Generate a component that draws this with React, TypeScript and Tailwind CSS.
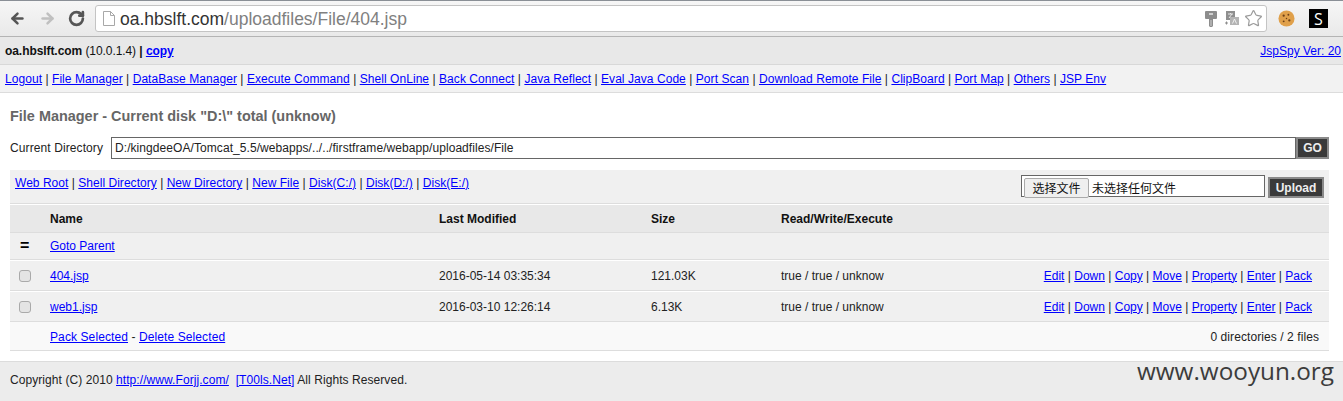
import { useState } from "react";
import { ArrowLeft, ArrowRight, RotateCw, Star } from "lucide-react";

const navLinks = [
  "Logout",
  "File Manager",
  "DataBase Manager",
  "Execute Command",
  "Shell OnLine",
  "Back Connect",
  "Java Reflect",
  "Eval Java Code",
  "Port Scan",
  "Download Remote File",
  "ClipBoard",
  "Port Map",
  "Others",
  "JSP Env",
];
const toolLinks = ["Web Root", "Shell Directory", "New Directory", "New File", "Disk(C:/)", "Disk(D:/)", "Disk(E:/)"];
const actions = ["Edit", "Down", "Copy", "Move", "Property", "Enter", "Pack"];

const files = [
  { name: "404.jsp", modified: "2016-05-14 03:35:34", size: "121.03K" },
  { name: "web1.jsp", modified: "2016-03-10 12:26:14", size: "6.13K" },
];

function A({ children }: { children: React.ReactNode }) {
  return <a className="text-[#0000ff] underline cursor-pointer">{children}</a>;
}

function LinkRow({ items }: { items: string[] }) {
  return (
    <>
      {items.map((l, i) => (
        <span key={l}>
          {i > 0 && " | "}
          <A>{l}</A>
        </span>
      ))}
    </>
  );
}

function Toolbar() {
  return (
    <div className="h-[37px] flex items-center border-t border-b border-t-[#8a8f96] border-b-[#b4b4b4] bg-gradient-to-b from-[#f6f6f6] to-[#e9e9e9]">
      <div className="w-[95px] flex items-center pl-[9px]">
        <ArrowLeft className="w-[17px] h-[17px] text-[#555]" strokeWidth={3.5} />
        <ArrowRight className="ml-[13px] w-[17px] h-[17px] text-[#c0c0c0]" strokeWidth={3.5} />
        <RotateCw className="ml-[12px] w-[17px] h-[17px] text-[#555]" strokeWidth={3.8} />
      </div>
      <div className="w-[1172px] h-[27px] flex items-center bg-white border border-[#c4c4c4] rounded-[3px] pl-[7px] pr-[3px]">
        <svg className="shrink-0" width="12" height="15" viewBox="0 0 12 15" fill="none">
          <path d="M.5.500h7l4 4v10H.5z" fill="#fff" stroke="#a8a8a8" />
          <path d="M7.500.500v4h4" stroke="#a8a8a8" />
        </svg>
        <span className="ml-[5px] text-[17.500px] text-[#333]">
          oa.hbslft.com<span className="text-[#808080]">/uploadfiles/File/404.jsp</span>
        </span>
        <div className="ml-auto flex items-center">
          <svg width="12" height="16" viewBox="0 0 12 16">
            <path d="M1 0h10a1 1 0 0 1 1 1v6a1 1 0 0 1-1 1H8v7l-1 1H5l-1-1V8H1a1 1 0 0 1-1-1V1a1 1 0 0 1 1-1z" fill="#8d8d8d" />
            <rect x="4" y="2" width="4" height="2" fill="#d0d0d0" />
            <rect x="5.500" y="9" width="1" height="6" fill="#d0d0d0" />
          </svg>
          <svg className="ml-[8px]" width="14" height="15" viewBox="0 0 14 15">
            <rect x="1" y="0" width="9" height="9" fill="#8f8f8f" />
            <path d="M3 3h5M5.500 2v1M4 7l3-4" stroke="#e8e8e8" fill="none" />
            <rect x="5" y="6" width="9" height="8" fill="#b4b4b4" />
            <path d="M7.500 12.500l2-4.500 2 4.500" stroke="#f0f0f0" fill="none" />
            <path d="M0 12h3M1.500 10.500v3" stroke="#8d8d8d" />
          </svg>
          <Star className="ml-[5px] w-[19px] h-[19px] text-[#9b9b9b]" strokeWidth={1.5} />
        </div>
      </div>
      <svg className="ml-[11px]" width="17" height="17" viewBox="0 0 18 18">
        <circle cx="9" cy="9" r="8.500" fill="#e0a04a" />
        <circle cx="6" cy="6" r="1.200" fill="#6d3f16" />
        <circle cx="11" cy="5" r="1" fill="#6d3f16" />
        <circle cx="12" cy="11" r="1.200" fill="#6d3f16" />
        <circle cx="6" cy="12" r="1" fill="#6d3f16" />
        <circle cx="9" cy="9" r="0.800" fill="#6d3f16" />
      </svg>
      <div className="ml-[14px] w-[19px] h-[19px] bg-black text-white text-[16px] flex items-center justify-center font-['Open_Sans',sans-serif]">
        S
      </div>
    </div>
  );
}

export default function App() {
  const [dir, setDir] = useState("D:/kingdeeOA/Tomcat_5.5/webapps/../../firstframe/webapp/uploadfiles/File");

  return (
    <div className="w-[1343px] h-[401px] overflow-hidden bg-white text-[12px] leading-[14px] text-[#222] font-['Liberation_Sans',Arial,sans-serif]">
      <Toolbar />

      {/* Header */}
      <div className="h-[28px] pt-[1px] flex items-center justify-between pl-[5px] pr-[2px] bg-[#e8e8e8] border-b border-[#d8d8d8]">
        <span className="font-bold text-[#111] tracking-[-0.07px]">
          oa.hbslft.com <span className="font-normal">(10.0.1.4)</span> | <A>copy</A>
        </span>
        <span className="whitespace-nowrap">
          <A>JspSpy Ver: 20</A>
        </span>
      </div>

      {/* Nav */}
      <div className="h-[28px] flex items-center px-[5px] bg-[#f2f2f2] border-b border-[#dcdcdc]">
        <span className="tracking-[0.055px]">
          <LinkRow items={navLinks} />
        </span>
      </div>

      {/* File manager */}
      <div className="h-[268px] pt-[15px] pl-[10px] pr-[14px]">
        <h2 className="text-[14.450px] leading-[16px] font-bold text-[#666]">
          File Manager - Current disk "D:\" total (unknow)
        </h2>
        <div className="mt-[13px] h-[22px] flex items-center">
          <label className="w-[101px] tracking-[0.1px]">Current Directory</label>
          <input
            value={dir}
            onChange={(e) => setDir(e.target.value)}
            className="w-[1185px] h-[22px] px-[3px] bg-white border border-[#666] text-[12px] tracking-[0.07px] text-[#222] outline-none"
          />
          <button className="w-[33px] h-[22px] bg-[#3a3a3a] border-2 border-[#8a8a8a] text-[#eee] text-[12px] font-bold">
            GO
          </button>
        </div>

        <div className="mt-[11px] h-[34px] flex items-start justify-between bg-[#f0f0f0] pl-[5px] pr-[5px] border-b border-[#dddddd]">
          <span className="mt-[6px] tracking-[0.03px]">
            <LinkRow items={toolLinks} />
          </span>
          <div className="flex items-start gap-[3px] mt-[5px]">
            <div className="w-[244px] h-[22px] flex items-start pl-[2px] pt-[2px] bg-white border border-[#666] text-[12px] text-[#111] font-['Noto_Sans_CJK_SC',sans-serif]">
              <span className="w-[65px] h-[20px] shrink-0 flex items-center justify-center bg-[#efefef] border border-[#aaa] rounded-[2px]">
                选择文件
              </span>
              <span className="ml-[3px] leading-[20px]">未选择任何文件</span>
            </div>
            <button className="mt-[2px] w-[56px] h-[21px] bg-[#3a3a3a] border-2 border-[#8a8a8a] text-[#eee] text-[12px] font-bold">
              Upload
            </button>
          </div>
        </div>

        {/* Table header */}
        <div className="h-[29px] flex items-center font-bold text-[#111] bg-[#e8e8e8] border-t border-b border-t-white border-b-[#dddddd]">
          <span className="ml-[40px] w-[389px]">Name</span>
          <span className="w-[212px]">Last Modified</span>
          <span className="w-[130px]">Size</span>
          <span>Read/Write/Execute</span>
        </div>

        <div className="h-[27px] flex items-center bg-[#f0f0f0] border-b border-[#dddddd]">
          <span className="w-[40px] pl-[10px] font-bold text-[16px] text-black">=</span>
          <A>Goto Parent</A>
        </div>

        {files.map((f) => (
          <div key={f.name} className="h-[31px] flex items-center bg-[#f0f0f0] border-t border-b border-t-white border-b-[#dddddd]">
            <span className="w-[40px] pl-[9px] flex">
              <span className="w-[12px] h-[12px] rounded-[3px] bg-[#e4e4e4] border border-[#aaaaaa]" />
            </span>
            <span className="w-[389px]">
              <A>{f.name}</A>
            </span>
            <span className="w-[212px]">{f.modified}</span>
            <span className="w-[130px]">{f.size}</span>
            <span>true / true / unknow</span>
            <span className="ml-auto pr-[17px]">
              <LinkRow items={actions} />
            </span>
          </div>
        ))}

        <div className="h-[29px] pt-[2px] flex items-center justify-between bg-[#f9f9f9] border-b border-[#dddddd] pl-[40px] pr-[10px]">
          <span className="tracking-[0.1px]">
            <A>Pack Selected</A> - <A>Delete Selected</A>
          </span>
          <span className="tracking-[0.08px]">0 directories / 2 files</span>
        </div>
      </div>

      {/* Footer */}
      <div className="relative h-[40px] flex items-center px-[10px] pb-[4px] bg-[#ececec] border-t border-[#dcdcdc]">
        <span className="tracking-[0.07px]">
          Copyright (C) 2010 <A>http://www.Forjj.com/</A>
          &nbsp; <A>[T00ls.Net]</A> All Rights Reserved.
        </span>
        <span className="absolute right-[9px] top-[-6px] text-[24.300px] leading-[30px] text-[#3c3c3c] font-['Open_Sans',sans-serif]">
          www.wooyun.org
        </span>
      </div>
    </div>
  );
}
